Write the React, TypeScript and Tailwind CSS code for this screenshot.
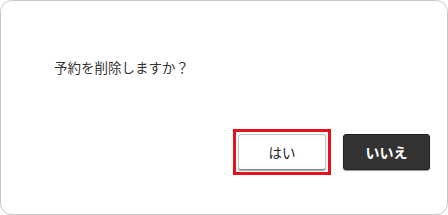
export default function App() {
  return (
    <div
      className="w-[448px] h-[215px] bg-white"
      style={{ fontFamily: '"Noto Sans CJK JP", "Noto Sans", sans-serif' }}
    >
      <div className="flex h-full w-full flex-col rounded-[12px] border border-[#c8c8c8] bg-white">
        <p className="ml-[53px] mt-[56px] text-[13.5px] leading-[20px] text-[#333333]">
          予約を削除しますか？
        </p>
        <div className="mt-auto mb-[39px] mr-[17px] flex items-center justify-end gap-[12px]">
          {/* highlighted button */}
          <div className="border-[3px] border-[#e5121d] p-[2px]">
            <button className="flex h-[36px] w-[88px] items-center justify-center rounded-[3px] border border-[#c4c4c4] border-b-[#8a8a8a] bg-white text-[13.5px] text-[#222222] shadow-[0_1px_1px_rgba(0,0,0,0.35)]">
              はい
            </button>
          </div>
          <button className="flex h-[36px] w-[87px] items-center justify-center rounded-[3px] border border-[#222222] bg-[#333333] text-[14px] font-bold text-white shadow-[0_1px_1px_rgba(0,0,0,0.4)]">
            いいえ
          </button>
        </div>
      </div>
    </div>
  );
}
